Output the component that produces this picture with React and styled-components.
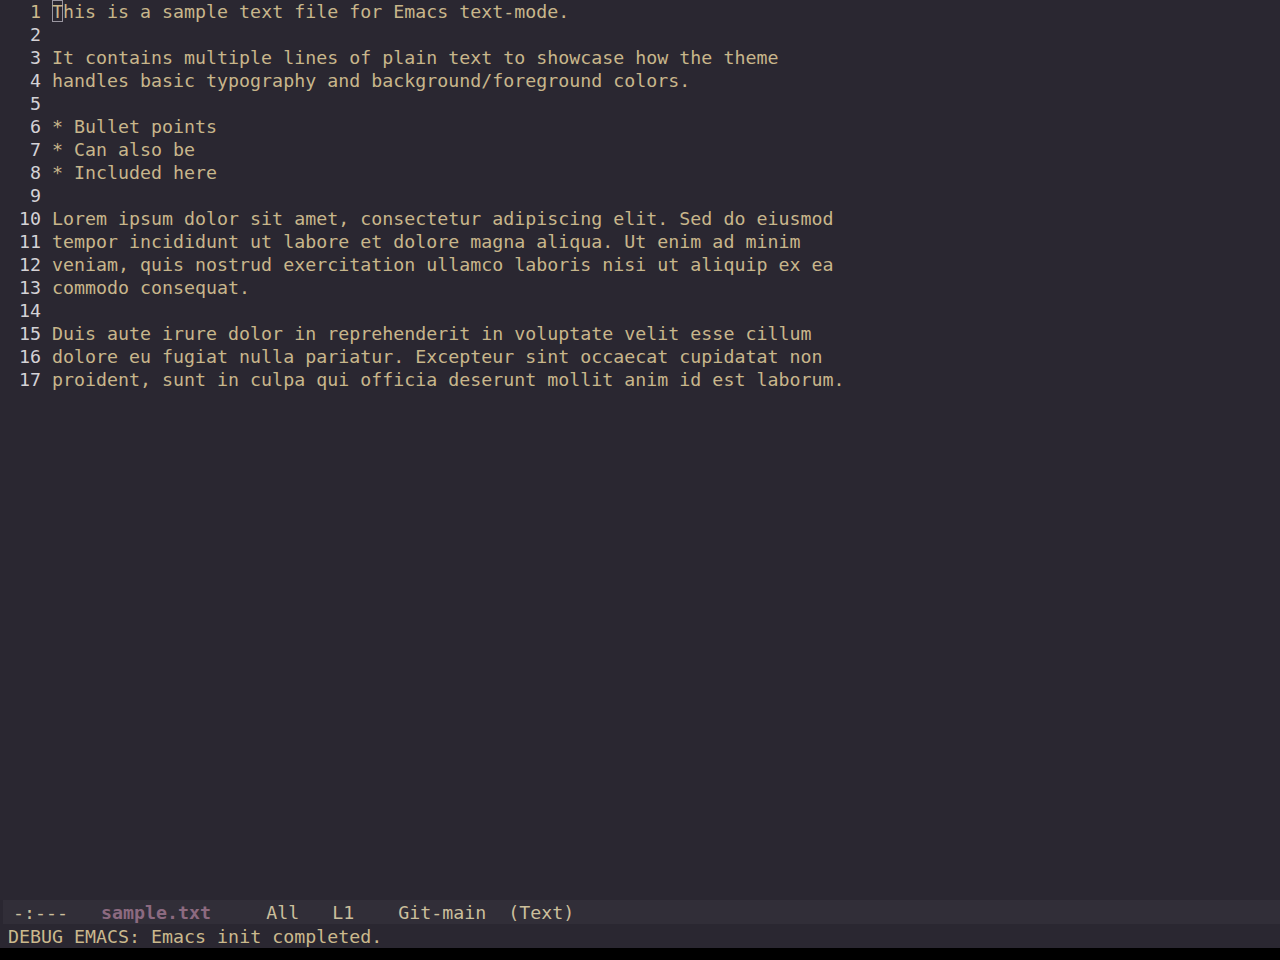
import React from 'react';
import styled, { createGlobalStyle } from 'styled-components';

const lines = [
  'This is a sample text file for Emacs text-mode.',
  '',
  'It contains multiple lines of plain text to showcase how the theme',
  'handles basic typography and background/foreground colors.',
  '',
  '* Bullet points',
  '* Can also be',
  '* Included here',
  '',
  'Lorem ipsum dolor sit amet, consectetur adipiscing elit. Sed do eiusmod',
  'tempor incididunt ut labore et dolore magna aliqua. Ut enim ad minim',
  'veniam, quis nostrud exercitation ullamco laboris nisi ut aliquip ex ea',
  'commodo consequat.',
  '',
  'Duis aute irure dolor in reprehenderit in voluptate velit esse cillum',
  'dolore eu fugiat nulla pariatur. Excepteur sint occaecat cupidatat non',
  'proident, sunt in culpa qui officia deserunt mollit anim id est laborum.',
];

function App() {
  return (
    <>
      <GlobalStyle />
      <Frame>
        <Buffer>
          {lines.map((text, i) => (
            <Row key={i}>
              <LineNo current={i === 0}>{i + 1}</LineNo>
              <Text>
                {i === 0 ? (
                  <>
                    <Cursor>{text[0]}</Cursor>
                    {text.slice(1)}
                  </>
                ) : (
                  text
                )}
              </Text>
            </Row>
          ))}
        </Buffer>
        <ModeLine>
          <Seg>{'-:---   '}</Seg>
          <BufName>sample.txt</BufName>
          <Seg>{'     All   L1    Git-main  (Text)'}</Seg>
        </ModeLine>
        <Echo>DEBUG EMACS: Emacs init completed.</Echo>
      </Frame>
    </>
  );
}

export default App;

const GlobalStyle = createGlobalStyle`
  html, body {
    margin: 0;
    padding: 0;
    background: #000;
  }
  body {
    font-family: "DejaVu Sans Mono", "Liberation Mono", monospace;
  }
`;

const Frame = styled.div`
  display: flex;
  flex-direction: column;
  height: 948px;
  background: #2a2731;
  font-size: 18.3px;
  line-height: 23px;
`;

const Buffer = styled.div`
  flex: 1;
  display: flex;
  flex-direction: column;
`;

const Row = styled.div`
  display: flex;
  height: 23px;
  white-space: pre;
`;

const LineNo = styled.span`
  width: 22px;
  padding-left: 19px;
  padding-right: 11px;
  text-align: right;
  color: ${(p) => (p.current ? '#cdb98c' : '#d4d2d6')};
`;

const Text = styled.span`
  color: #c8b68b;
`;

const Cursor = styled.span`
  box-shadow: inset 0 0 0 1px #9a96a0;
  padding-top: 1px;
`;

const ModeLine = styled.div`
  height: 24px;
  box-sizing: border-box;
  padding: 1px 0 0 10px;
  line-height: 24px;
  background: #312e38;
  border-left: 3px solid #2a2731;
  white-space: pre;
  color: #cbbf9c;
`;

const Seg = styled.span``;

const BufName = styled.span`
  color: #8c6a80;
  font-weight: bold;
`;

const Echo = styled.div`
  height: 24px;
  box-sizing: border-box;
  padding: 1px 0 0 8px;
  line-height: 24px;
  background: #2a2731;
  color: #cbb98d;
  white-space: pre;
`;
